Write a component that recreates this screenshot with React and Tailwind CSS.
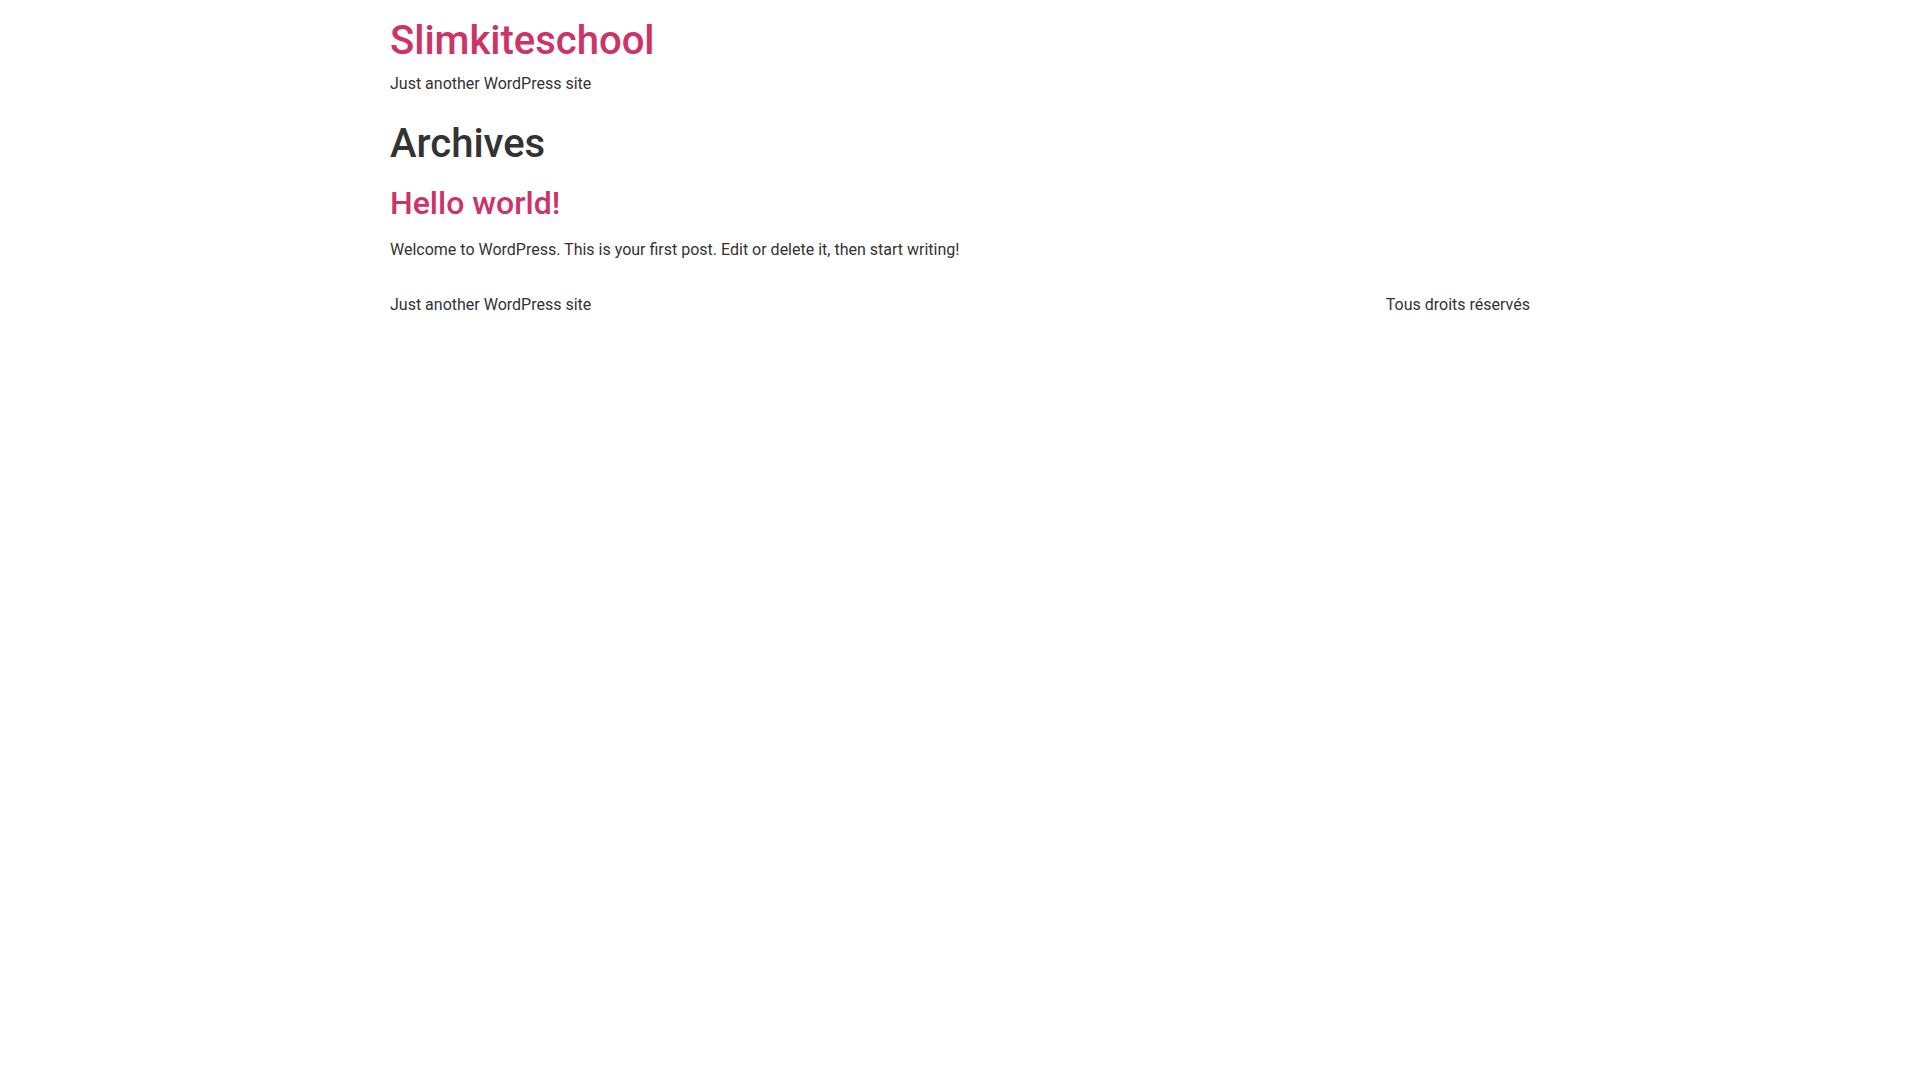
export default function App() {
  return (
    <div className="min-h-screen bg-white text-[#333333] font-['Roboto',sans-serif] text-base leading-6">
      <div className="mx-auto w-[1140px]">
        <header className="pt-[17px]">
          <h1 className="text-[40px] leading-[48px] font-medium">
            <a href="#" className="text-[#cc3366]">Slimkiteschool</a>
          </h1>
          <p className="mt-[7px]">Just another WordPress site</p>
        </header>
        <main className="mt-[24px]">
          <h1 className="text-[40px] leading-[48px] font-medium">Archives</h1>
          <article className="mt-[16px]">
            <h2 className="text-[32px] leading-[38px] font-medium">
              <a href="#" className="text-[#cc3366]">Hello world!</a>
            </h2>
            <p className="mt-[16px]">Welcome to WordPress. This is your first post. Edit or delete it, then start writing!</p>
          </article>
        </main>
        <footer className="mt-[31px] flex justify-between">
          <p>Just another WordPress site</p>
          <p>Tous droits réservés</p>
        </footer>
      </div>
    </div>
  );
}
